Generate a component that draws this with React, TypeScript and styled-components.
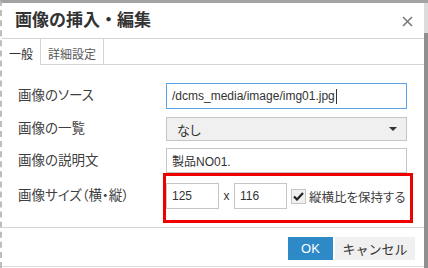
import React from "react";
import styled, { createGlobalStyle, css } from "styled-components";

const Global = createGlobalStyle`
  html, body { margin: 0; padding: 0; background: #fff; }
  body {
    font-family: "Liberation Sans", "Noto Sans CJK JP", sans-serif;
    color: #333;
    font-feature-settings: "palt";
  }
  * { box-sizing: border-box; }
`;

const Frame = styled.div`
  width: 428px;
  height: 268px;
  overflow: hidden;
  display: flex;
  border-top: 3px solid #a3a3a3;
  border-left: 2px dashed #bdbdbd;
  background: #fff;
`;

const Dialog = styled.div`
  flex: 1;
  display: flex;
  flex-direction: column;
  min-width: 0;
`;

const Strip = styled.div`
  width: 4px;
  flex: none;
  background: linear-gradient(#dcdcdc 0 30px, #8f8f8f 30px);
`;

const Header = styled.div`
  height: 36px;
  flex: none;
  display: flex;
  align-items: center;
  justify-content: space-between;
  padding: 1px 11px 0 13px;
  border-bottom: 1px solid #d4d4d4;
`;

const Title = styled.div`
  font-size: 17px;
  font-weight: bold;
  color: #333;
  line-height: 20px;
  font-feature-settings: normal;
`;

const Close = styled.button`
  border: 0;
  background: none;
  padding: 0;
  width: 12px;
  height: 12px;
  display: flex;
  align-items: center;
  justify-content: center;
  cursor: pointer;
`;

const Tabs = styled.div`
  height: 26px;
  flex: none;
  display: flex;
  border-bottom: 1px solid #d4d4d4;
`;

const Tab = styled.div<{ $active?: boolean }>`
  height: 25px;
  padding: 10px 7px 0;
  font-size: 12px;
  line-height: 12px;
  color: #595959;
  border-right: 1px solid #d4d4d4;
  background: #fff;
  font-feature-settings: normal;
  ${(p) =>
    p.$active &&
    css`
      height: 26px;
      margin-bottom: -1px;
      color: #333;
    `}
`;

const Body = styled.div`
  height: 162px;
  flex: none;
  padding: 18px 17px 0 16px;
  display: flex;
  flex-direction: column;
`;

const Row = styled.div<{ $h: number; $mt?: number }>`
  display: grid;
  grid-template-columns: 148px 1fr;
  align-items: center;
  height: ${(p) => p.$h}px;
  margin-top: ${(p) => p.$mt ?? 0}px;
`;

const Label = styled.div`
  font-size: 13.5px;
  line-height: 16px;
  color: #404040;
`;

const Field = styled.div<{ $focus?: boolean; $w?: number }>`
  height: 100%;
  display: flex;
  align-items: center;
  padding: 0 5px;
  border: 1px solid ${(p) => (p.$focus ? "#59a5e5" : "#c5c5c5")};
  background: #fff;
  font-size: 12px;
  color: #333;
  white-space: nowrap;
  ${(p) =>
    p.$w &&
    css`
      width: ${p.$w}px;
      flex: none;
    `}
`;

const Caret = styled.span`
  display: inline-block;
  width: 1px;
  height: 15px;
  background: #333;
  margin-left: 1px;
`;

const Select = styled.div`
  height: 100%;
  display: flex;
  align-items: center;
  justify-content: space-between;
  padding: 0 9px 0 10px;
  border: 1px solid #c5c5c5;
  background: #f0f0f0;
  font-size: 13px;
  color: #333;
`;

const Arrow = styled.span`
  width: 0;
  height: 0;
  border-left: 4px solid transparent;
  border-right: 4px solid transparent;
  border-top: 4px solid #333;
`;

const SizeGroup = styled.div`
  position: relative;
  height: 100%;
  display: flex;
  align-items: center;
`;

const Times = styled.span`
  font-size: 12px;
  color: #333;
  width: 15px;
  text-align: center;
`;

const Check = styled.span`
  width: 15px;
  height: 15px;
  margin: 0 3px 0 4px;
  border: 1px solid #c5c5c5;
  background: #f0f0f0;
  display: flex;
  align-items: center;
  justify-content: center;
`;

const CheckLabel = styled.span`
  font-size: 12.5px;
  color: #404040;
  white-space: nowrap;
`;

const Highlight = styled.div`
  position: absolute;
  top: -10px;
  left: -3px;
  right: -6px;
  bottom: -14px;
  border: 3px solid #ee0000;
  pointer-events: none;
`;

const Footer = styled.div`
  height: 40px;
  flex: none;
  border-top: 1px solid #d4d4d4;
  border-bottom: 1px solid #dcdcdc;
  display: flex;
  justify-content: flex-end;
  align-items: flex-start;
  gap: 2px;
  padding: 9px 9px 0 0;
`;

const Button = styled.button<{ $primary?: boolean; $w: number }>`
  width: ${(p) => p.$w}px;
  height: 23px;
  border: 0;
  padding: 0;
  font-family: inherit;
  font-size: 13px;
  background: ${(p) => (p.$primary ? "#2d8ac7" : "#f0f0f0")};
  color: ${(p) => (p.$primary ? "#fff" : "#333")};
  cursor: pointer;
`;

export default function App() {
  return (
    <>
      <Global />
      <Frame>
        <Dialog>
          <Header>
            <Title>画像の挿入・編集</Title>
            <Close aria-label="閉じる">
              <svg width="11" height="11" viewBox="0 0 11 11">
                <path d="M1 1 L10 10 M10 1 L1 10" stroke="#7a7a7a" strokeWidth="1.6" />
              </svg>
            </Close>
          </Header>
          <Tabs>
            <Tab $active>一般</Tab>
            <Tab>詳細設定</Tab>
          </Tabs>
          <Body>
            <Row $h={26}>
              <Label>画像のソース</Label>
              <Field $focus>
                /dcms_media/image/img01.jpg
                <Caret />
              </Field>
            </Row>
            <Row $h={24} $mt={8}>
              <Label>画像の一覧</Label>
              <Select>
                なし
                <Arrow />
              </Select>
            </Row>
            <Row $h={25} $mt={7}>
              <Label>画像の説明文</Label>
              <Field>製品NO01.</Field>
            </Row>
            <Row $h={26} $mt={10}>
              <Label>画像サイズ（横・縦）</Label>
              <SizeGroup>
                <Field $w={53}>125</Field>
                <Times>x</Times>
                <Field $w={53}>116</Field>
                <Check>
                  <svg width="11" height="9" viewBox="0 0 11 9">
                    <path d="M1 4.5 L4 7.5 L10 1" stroke="#222" strokeWidth="2.2" fill="none" />
                  </svg>
                </Check>
                <CheckLabel>縦横比を保持する</CheckLabel>
                <Highlight />
              </SizeGroup>
            </Row>
          </Body>
          <Footer>
            <Button $primary $w={45}>OK</Button>
            <Button $w={80}>キャンセル</Button>
          </Footer>
        </Dialog>
        <Strip />
      </Frame>
    </>
  );
}
